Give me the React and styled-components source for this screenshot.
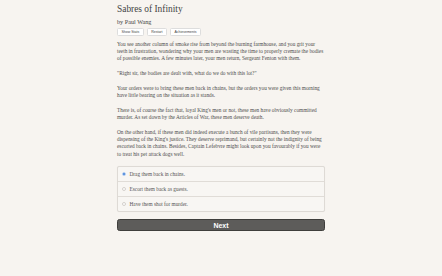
import React from "react";
import styled, { createGlobalStyle } from "styled-components";

const GlobalStyle = createGlobalStyle`
  html, body {
    margin: 0;
    padding: 0;
    background: #f7f4f0;
  }
  body {
    font-family: "Liberation Serif", "DejaVu Serif", serif;
    color: #4a4a4a;
  }
`;

const Page = styled.main`
  width: 208px;
  margin: 0 auto;
  padding-top: 3px;
`;

const Title = styled.h1`
  font-size: 9.4px;
  font-weight: normal;
  margin: 0;
  line-height: 12px;
  color: #444;
`;

const Author = styled.h2`
  font-size: 6.2px;
  font-weight: normal;
  margin: 2px 0 0;
  line-height: 9px;
  color: #444;
`;

const Toolbar = styled.div`
  display: flex;
  gap: 3px;
  margin: 2px 0 0;
`;

const SmallButton = styled.button`
  font-family: "Liberation Sans", Arial, sans-serif;
  font-size: 3.5px;
  line-height: 4px;
  padding: 1px 3.5px;
  background: #fff;
  color: #444;
  border: 0.5px solid #ddd;
  border-radius: 1.5px;
`;

const Story = styled.div`
  margin-top: 4.5px;
  font-size: 5.3px;
  line-height: 7.4px;
  color: #4d4d4d;

  p {
    margin: 0 0 7.2px;
  }
  p:last-child {
    margin-bottom: 0;
  }
`;

const Choices = styled.form`
  margin-top: 8px;
  border: 0.6px solid #dedad5;
  border-radius: 2px;
  background: #f8f6f3;
  box-shadow: 0 0 1px rgba(0, 0, 0, 0.06);
`;

const Choice = styled.label`
  display: flex;
  align-items: center;
  gap: 3.5px;
  height: 14px;
  padding: 0 4px;
  font-size: 5.3px;
  color: #555;
  border-top: ${(p) => (p.$first ? "none" : "0.6px solid #e0dcd7")};
`;

const Radio = styled.span`
  width: 4px;
  height: 4px;
  border-radius: 50%;
  box-sizing: border-box;
  background: ${(p) => (p.$checked ? "#3a7bd5" : "#fff")};
  border: ${(p) => (p.$checked ? "1px solid #bcd3f3" : "0.5px solid #d4d0cc")};
`;

const NextButton = styled.button`
  display: block;
  width: 100%;
  margin-top: 7px;
  height: 12px;
  padding: 0;
  background: #5d5c5a;
  color: #fff;
  border: 0.6px solid #3f3e3c;
  border-radius: 2.5px;
  font-family: "Liberation Sans", Arial, sans-serif;
  font-weight: bold;
  font-size: 7px;
`;

const options = [
  "Drag them back in chains.",
  "Escort them back as guests.",
  "Have them shot for murder.",
];

export default function App() {
  return (
    <>
      <GlobalStyle />
      <Page>
        <Title>Sabres of Infinity</Title>
        <Author>by Paul Wang</Author>
        <Toolbar>
          <SmallButton>Show Stats</SmallButton>
          <SmallButton>Restart</SmallButton>
          <SmallButton>Achievements</SmallButton>
        </Toolbar>
        <Story>
          <p>
            You see another column of smoke rise from beyond the burning farmhouse, and you grit your
            teeth in frustration, wondering why your men are wasting the time to properly cremate the
            bodies of possible enemies. A few minutes later, your men return, Sergeant Fenton with them.
          </p>
          <p>"Right sir, the bodies are dealt with, what do we do with this lot?"</p>
          <p>
            Your orders were to bring these men back in chains, but the orders you were given this morning
            have little bearing on the situation as it stands.
          </p>
          <p>
            There is, of course the fact that, loyal King's men or not, these men have obviously committed
            murder. As set down by the Articles of War, these men deserve death.
          </p>
          <p>
            On the other hand, if these men did indeed execute a bunch of vile partisans, then they were
            dispensing of the King's justice. They deserve reprimand, but certainly not the indignity of
            being escorted back in chains. Besides, Captain Lefebvre might look upon you favourably if you
            were to treat his pet attack dogs well.
          </p>
        </Story>
        <Choices>
          {options.map((o, i) => (
            <Choice key={o} $first={i === 0}>
              <Radio $checked={i === 0} />
              {o}
            </Choice>
          ))}
        </Choices>
        <NextButton type="button">Next</NextButton>
      </Page>
    </>
  );
}
